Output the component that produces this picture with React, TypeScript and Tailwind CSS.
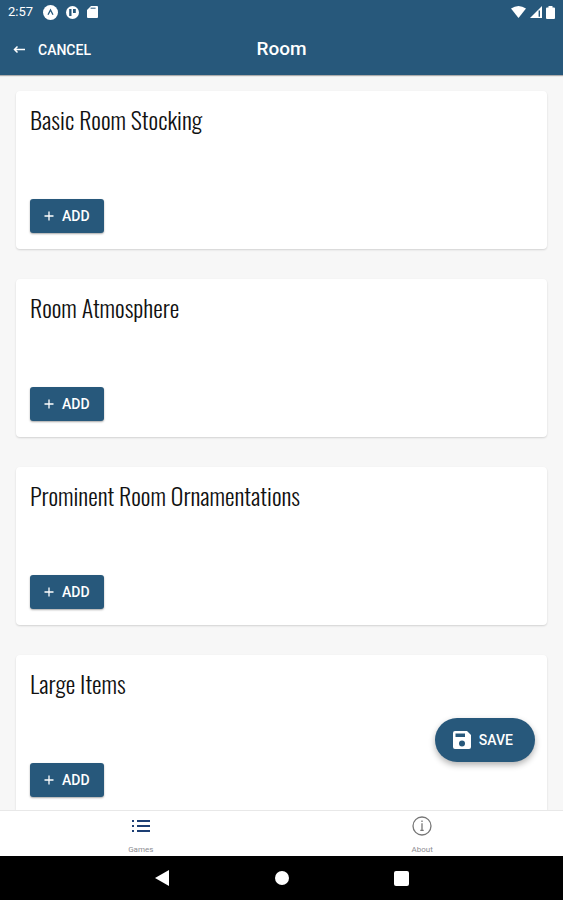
import React from 'react';

interface Section {
    id: string;
    title: string;
}

const sections: Section[] = [
    { id: 'stocking', title: 'Basic Room Stocking' },
    { id: 'atmosphere', title: 'Room Atmosphere' },
    { id: 'ornamentations', title: 'Prominent Room Ornamentations' },
    { id: 'large-items', title: 'Large Items' },
];

const StatusBar = () => (
    <div className="flex h-6 items-center justify-between px-2">
        <div className="flex items-center gap-2">
            <span className="text-[13px] leading-4">2:57</span>
            <svg className="ml-[2px] h-[15px] w-[15px]" viewBox="0 0 15 15">
                <circle cx="7.5" cy="7.5" r="7.5" fill="#fff" />
                <path d="M5 9.800 7.500 5l2.500 4.800" fill="none" stroke="#27587b" strokeWidth="1.3" />
            </svg>
            <svg className="h-[13px] w-[13px]" viewBox="0 0 13 13">
                <circle cx="6.5" cy="6.5" r="6.5" fill="#fff" />
                <path d="M3.200 3h2.300v7H3.200zM7 3h2.800v4H7z" fill="#27587b" />
            </svg>
            <svg className="h-3 w-[11px]" viewBox="0 0 11 12">
                <path d="M4 0h6a1 1 0 0 1 1 1v10a1 1 0 0 1-1 1H1a1 1 0 0 1-1-1V4z" fill="#fff" />
                <path d="M3.6 2.2h5" stroke="#27587b" strokeWidth="1" />
            </svg>
        </div>
        <div className="flex items-center gap-1">
            <svg className="h-3 w-[15px]" viewBox="0 0 15 12">
                <path d="M0 2.6Q7.5-2.6 15 2.6L7.5 12z" fill="#fff" />
            </svg>
            <svg className="h-3 w-3" viewBox="0 0 12 12">
                <path d="M12 0v12H0z" fill="#fff" />
                <path d="M9.3 4.5v6.2" stroke="#27587b" strokeWidth="1.4" />
            </svg>
            <svg className="h-[13px] w-[9px]" viewBox="0 0 9 13">
                <path d="M2.500 0h4v1.400H8a1 1 0 0 1 1 1V12a1 1 0 0 1-1 1H1a1 1 0 0 1-1-1V2.400a1 1 0 0 1 1-1h1.500z" fill="#fff" />
            </svg>
        </div>
    </div>
);

const Header = () => (
    <header className="z-10 bg-[#27587b] text-white shadow-[0_1px_1px_rgba(0,0,0,0.3)]">
        <StatusBar />
        <div className="grid h-[51px] grid-cols-3 items-center px-3">
            <button type="button" className="flex items-center gap-3 text-sm font-medium">
                <svg className="h-[14px] w-[14px]" viewBox="0 0 14 14" fill="none" stroke="#fff" strokeWidth="1.5">
                    <path d="M13 6.500H2.500M5.500 3.500l-3 3 3 3" />
                </svg>
                CANCEL
            </button>
            <h1 className="text-center text-[19px] font-medium">Room</h1>
        </div>
    </header>
);

const SectionCard = ({ title }: { title: string }) => (
    <section className="shrink-0 rounded bg-white px-[14px] pt-3 pb-4 shadow-[0_1px_2px_rgba(0,0,0,0.15)]">
        <h2 className="mb-16 font-['Oswald',sans-serif] text-2xl leading-8 font-light text-[#111111]">
            {title}
        </h2>
        <button
            type="button"
            className="flex h-[34px] items-center gap-2 rounded-[3px] bg-[#27587b] px-[14px] text-sm font-medium text-white shadow-[0_1px_2px_rgba(0,0,0,0.35)]"
        >
            <svg className="h-[10px] w-[10px]" viewBox="0 0 10 10" stroke="#fff" strokeWidth="1.3">
                <path d="M5 .5v9M.5 5h9" />
            </svg>
            ADD
        </button>
    </section>
);

const SaveButton = () => (
    <button
        type="button"
        className="absolute right-7 bottom-12 flex h-11 items-center gap-2 rounded-full bg-[#27587b] pl-[18px] pr-[22px] text-sm font-medium text-white shadow-[0_3px_6px_rgba(0,0,0,0.3)]"
    >
        <svg className="h-[18px] w-[18px]" viewBox="0 0 18 18">
            <path
                d="M2 0h12l4 4v12a2 2 0 0 1-2 2H2a2 2 0 0 1-2-2V2a2 2 0 0 1 2-2zM2.500 2.500v3.500h9.500V2.500zM9 9.500a3 3 0 1 0 0 6 3 3 0 0 0 0-6z"
                fill="#fff"
                fillRule="evenodd"
            />
        </svg>
        SAVE
    </button>
);

const TabBar = () => (
    <nav className="grid grid-cols-2 border-t border-[#e8e8e8] bg-white text-[8px] leading-[10px] text-[#8e8e93]">
        <a href="#games" className="flex h-[45px] flex-col items-center gap-[9px] pt-[5px]">
            <svg className="h-5 w-5" viewBox="0 0 20 20" fill="none" stroke="#1d3f74" strokeWidth="2">
                <path d="M1 5h2M6 5h13M1 10h2M6 10h13M1 15h2M6 15h13" />
            </svg>
            Games
        </a>
        <a href="#about" className="flex h-[45px] flex-col items-center gap-[9px] pt-[5px]">
            <svg className="h-5 w-5" viewBox="0 0 20 20" fill="none" stroke="#777777" strokeWidth="1.3">
                <circle cx="10" cy="10" r="9" />
                <path d="M10 4.500v1.500M10 7.200v7M8.300 14.300h3.400" />
            </svg>
            About
        </a>
    </nav>
);

const SystemNav = () => (
    <div className="grid h-11 grid-cols-[1fr_120px_120px_120px_1fr] place-items-center bg-black">
        <button type="button" aria-label="Back" className="col-start-2">
            <svg className="h-4 w-[14px]" viewBox="0 0 14 16">
                <path d="M14 0v16L0 8z" fill="#fff" />
            </svg>
        </button>
        <button type="button" aria-label="Home" className="h-[14px] w-[14px] rounded-full bg-white" />
        <button type="button" aria-label="Recent apps" className="h-[15px] w-[15px] rounded-[2px] bg-white" />
    </div>
);

const App = () => (
    <div className="flex h-screen flex-col bg-[#f7f7f7] font-['Roboto',sans-serif]">
        <Header />
        <div className="relative min-h-0 flex-1">
            <main className="flex h-full flex-col gap-[30px] overflow-y-auto px-4 pt-4 [scrollbar-width:none]">
                {sections.map((section) => (
                    <SectionCard key={section.id} title={section.title} />
                ))}
            </main>
            <SaveButton />
        </div>
        <TabBar />
        <SystemNav />
    </div>
);

export default App;
